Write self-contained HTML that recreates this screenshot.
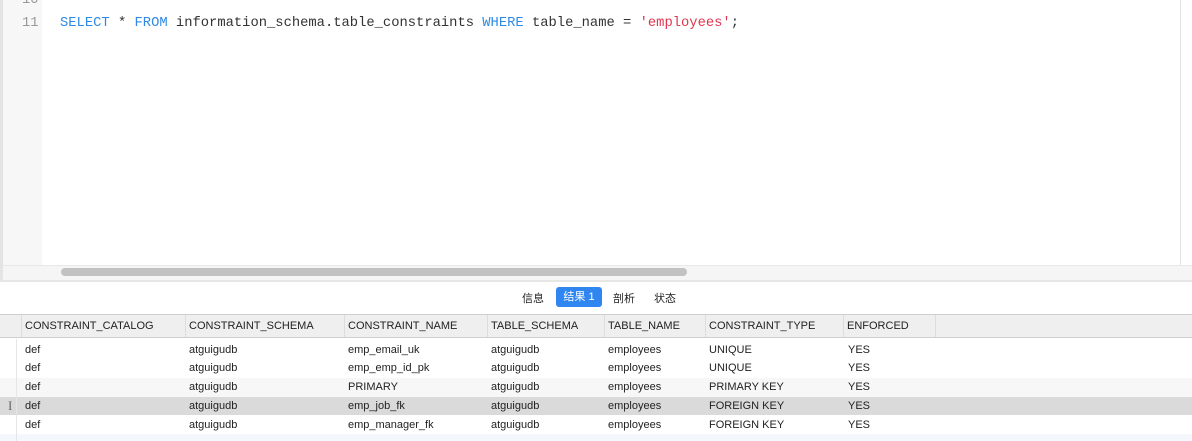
<!DOCTYPE html>
<html><head><meta charset="utf-8"><style>
*{margin:0;padding:0;box-sizing:border-box}
body{width:1192px;height:441px;overflow:hidden;background:#fff;font-family:"Liberation Sans","Noto Sans CJK SC",sans-serif;position:relative}
.abs{position:absolute}
.code{font-family:"Liberation Mono",monospace;font-size:13.8px;white-space:pre;color:#333}
.kw{color:#2f8ae5}.str{color:#e0364f}
.ln{color:#999;font-family:"Liberation Mono",monospace;font-size:13.8px}
.cell{position:absolute;font-size:11px;color:#222;white-space:nowrap}
.hd{position:absolute;top:315px;height:22px;line-height:22px;font-size:11px;color:#222;padding-left:3px;border-left:1px solid #ddd}
</style></head><body>
<div class="abs" style="left:0;top:0;width:3px;height:281px;background:#e4e4e4"></div>
<div class="abs" style="left:3px;top:0;width:39px;height:265px;background:#f7f7f7"></div>
<div class="abs" style="left:1180px;top:0;width:1px;height:265px;background:#e2e2e2"></div>
<div class="abs" style="left:3px;top:265px;width:1189px;height:15px;background:#f5f5f5;border-top:1px solid #e8e8e8"></div>
<div class="abs" style="left:61px;top:268px;width:626px;height:8px;border-radius:4px;background:#c2c2c2"></div>
<div class="abs" style="left:0;top:280px;width:1192px;height:2px;background:#e6e6e6"></div>
<div class="abs ln" style="left:22px;top:-7px">10</div>
<div class="abs ln" style="left:22px;top:16px">11</div>
<div class="abs code" style="left:60px;top:16px"><span class="kw">SELECT</span> * <span class="kw">FROM</span> information_schema.table_constraints <span class="kw">WHERE</span> table_name = <span class="str">'employees'</span>;</div>
<div class="abs" style="top:287px;left:0;width:1192px;height:20px;font-size:11px;color:#222">
<span class="abs" style="left:522px;top:3px">信息</span>
<span class="abs" style="left:556px;top:0;width:46px;height:20px;background:#2f86f0;color:#fff;border-radius:3px;text-align:center;line-height:20px">结果 1</span>
<span class="abs" style="left:613px;top:3px">剖析</span>
<span class="abs" style="left:654px;top:3px">状态</span>
</div>
<div class="abs" style="left:0;top:314px;width:1192px;height:24px;background:#efefef;border-top:1px solid #cfcfcf;border-bottom:1px solid #cfcfcf"></div>
<div class="hd" style="left:21px">CONSTRAINT_CATALOG</div>
<div class="hd" style="left:185px">CONSTRAINT_SCHEMA</div>
<div class="hd" style="left:344px">CONSTRAINT_NAME</div>
<div class="hd" style="left:487px">TABLE_SCHEMA</div>
<div class="hd" style="left:604px">TABLE_NAME</div>
<div class="hd" style="left:705px">CONSTRAINT_TYPE</div>
<div class="hd" style="left:843px">ENFORCED</div>
<div class="hd" style="left:935px;width:1px;padding:0"></div>
<div class="abs" style="left:0;top:378px;width:1192px;height:19px;background:#f7f7f7"></div>
<div class="abs" style="left:0;top:397px;width:1192px;height:18px;background:#dadada"></div>
<div class="abs" style="left:0;top:434px;width:1192px;height:7px;background:#f4f8fc"></div>
<div class="abs" style="left:16px;top:339px;width:1px;height:102px;background:#e6e6e6"></div>
<div class="abs" style="left:8px;top:398px;font-size:13px;color:#666;font-family:'Liberation Serif',serif">I</div>
<div id="rows"></div>
<script>
var d=[["def","atguigudb","emp_email_uk","atguigudb","employees","UNIQUE","YES"],["def","atguigudb","emp_emp_id_pk","atguigudb","employees","UNIQUE","YES"],["def","atguigudb","PRIMARY","atguigudb","employees","PRIMARY KEY","YES"],["def","atguigudb","emp_job_fk","atguigudb","employees","FOREIGN KEY","YES"],["def","atguigudb","emp_manager_fk","atguigudb","employees","FOREIGN KEY","YES"]];
var xs=[25,189,348,491,608,709,848],ys=[344,362,381,400,419],h="";
d.forEach(function(r,i){r.forEach(function(c,j){h+='<div class="cell" style="left:'+xs[j]+'px;top:'+ys[i]+'px">'+c+'</div>';});});
document.getElementById("rows").innerHTML=h;
</script>
</body></html>
